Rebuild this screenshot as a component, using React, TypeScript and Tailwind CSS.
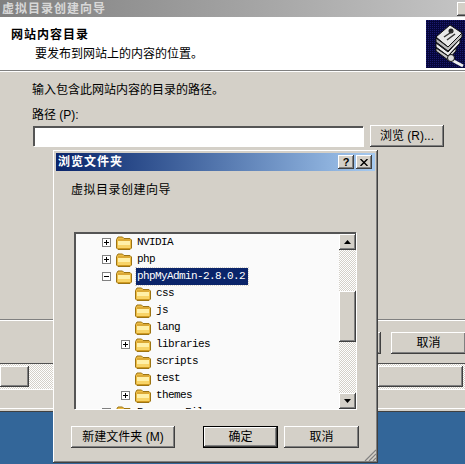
const font = "font-['Liberation_Sans','Noto_Sans_CJK_SC',sans-serif]"

const raised = 'shadow-[inset_-1px_-1px_0_#404040,inset_1px_1px_0_#ffffff,inset_-2px_-2px_0_#808080]'

const treeRows = [
  { label: 'NVIDIA', depth: 0, expander: '+' },
  { label: 'php', depth: 0, expander: '+' },
  { label: 'phpMyAdmin-2.8.0.2', depth: 0, expander: '-', selected: true },
  { label: 'css', depth: 1 },
  { label: 'js', depth: 1 },
  { label: 'lang', depth: 1 },
  { label: 'libraries', depth: 1, expander: '+' },
  { label: 'scripts', depth: 1 },
  { label: 'test', depth: 1 },
  { label: 'themes', depth: 1, expander: '+' },
  { label: 'Program Files', depth: 0, expander: '+' },
]

function Folder() {
  return (
    <svg width="16" height="14" viewBox="0 0 16 14" className="shrink-0">
      <path d="M0.500 3.500 L2 1 H6.500 L8 2.500 H14 L15.500 4 V12 L14 13.500 H2 L0.500 12 Z" fill="#eebc42" stroke="#9c7414" />
      <path d="M2 5 H14 V9 H2 Z" fill="#fff0a8" />
      <path d="M2 9 H14 V12 H2 Z" fill="#f8d468" />
      <path d="M2 4 H14" stroke="#c8962a" />
      <path d="M2 12.500 H14" stroke="#d09a20" />
    </svg>
  )
}

function Expander({ type }: { type: string }) {
  return (
    <span className="relative mr-[5px] h-[9px] w-[9px] shrink-0 border border-[#808080] bg-white">
      <span className="absolute left-[1px] top-[3px] h-[1px] w-[5px] bg-black" />
      {type === '+' && <span className="absolute left-[3px] top-[1px] h-[5px] w-[1px] bg-black" />}
    </span>
  )
}

function WinButton({ label, className = '', isDefault = false }: { label: string; className?: string; isDefault?: boolean }) {
  return (
    <div className={`flex h-[22px] shrink-0 items-center justify-center whitespace-pre bg-[#d4d0c8] text-[12px] text-black ${isDefault ? 'border border-black' : ''} ${raised} ${className}`}>
      {label}
    </div>
  )
}

function ScrollArrow({ up }: { up?: boolean }) {
  return (
    <div className={`flex h-[16px] w-full shrink-0 items-center justify-center bg-[#d4d0c8] ${raised}`}>
      <svg width="7" height="4" viewBox="0 0 7 4">
        <path d={up ? 'M3.500 0 L7 4 H0 Z' : 'M0 0 H7 L3.500 4 Z'} fill="#000" />
      </svg>
    </div>
  )
}

function WizardIcon() {
  return (
    <svg width="39" height="48" viewBox="0 0 39 48" className="shrink-0">
      <defs>
        <pattern id="dots" width="2" height="2" patternUnits="userSpaceOnUse">
          <rect width="2" height="2" fill="#06063a" />
          <rect width="1" height="1" fill="#1b1b70" />
        </pattern>
      </defs>
      <rect width="39" height="48" fill="url(#dots)" />
      <path d="M10 17 L24 5 L36 13 L22 27 Z" fill="#e8e8e8" stroke="#111" />
      <circle cx="25" cy="11" r="2.500" fill="#222" />
      <path d="M18 17 L27 11 M21 20 L29 14" stroke="#333" strokeWidth="1.500" />
      <path d="M10 18 V22 L22 31 L36 17 V13 L22 27 Z" fill="#bcbcbc" stroke="#111" />
      <path d="M10 23 V27 L22 36 L34 23 V19 L22 32 Z" fill="#ededed" stroke="#111" />
      <path d="M10 28 V31 L22 40 L30 31 V28 L22 36 Z" fill="#c8c8c8" stroke="#111" />
      <path d="M22 38 L37 46" stroke="#eee" strokeWidth="3" />
      <circle cx="25" cy="38" r="3.500" fill="#ddd" stroke="#111" />
    </svg>
  )
}

function BrowseDialog() {
  return (
    <div className="absolute left-[53px] top-[150px] flex h-[313px] w-[325px] flex-col bg-[#d4d0c8] p-[3px] shadow-[inset_-1px_-1px_0_#404040,inset_1px_1px_0_#ffffff,inset_-2px_-2px_0_#808080]">
      <div className="flex h-[18px] shrink-0 items-center justify-between bg-gradient-to-r from-[#0a246a] to-[#a6caf0] pl-[2px] pr-[3px]">
        <span className="text-[12px] font-bold tracking-[1px] text-white">浏览文件夹</span>
        <div className="flex gap-[2px]">
          <div className={`flex h-[14px] w-[16px] items-center justify-center bg-[#d4d0c8] text-[11px] font-bold text-black ${raised}`}>?</div>
          <div className={`flex h-[14px] w-[16px] items-center justify-center bg-[#d4d0c8] ${raised}`}>
            <svg width="8" height="7" viewBox="0 0 8 7">
              <path d="M0.500 0 L7.500 7 M7.500 0 L0.500 7" stroke="#000" strokeWidth="1.400" />
            </svg>
          </div>
        </div>
      </div>

      <p className="ml-[15px] mt-[10px] h-[18px] text-[12px] tracking-[0.5px] text-black">虚拟目录创建向导</p>

      <div className="ml-[18px] mt-[33px] flex h-[177px] w-[282px] shrink-0 border-l-2 border-t-2 border-l-[#555555] border-t-[#555555] bg-[#fafafa] shadow-[1px_1px_0_#ffffff]">
        <div className="min-w-0 flex-1 overflow-hidden font-['Liberation_Mono',monospace]">
          {treeRows.map((row) => (
            <div key={row.label} className={`flex h-[17px] items-center ${row.depth === 0 ? 'pl-[26px]' : 'pl-[45px]'}`}>
              {row.expander ? <Expander type={row.expander} /> : <span className="mr-[5px] w-[9px] shrink-0" />}
              <Folder />
              <span
                className={`ml-[4px] whitespace-nowrap pl-[1px] pr-[3px] text-[11px] tracking-[-0.6px] ${row.selected ? 'bg-[#0a246a] text-white outline-1 outline-dotted outline-[#d4d0c8]' : 'text-black'}`}
              >
                {row.label}
              </span>
            </div>
          ))}
        </div>
        <div className="flex w-[17px] shrink-0 flex-col bg-[repeating-conic-gradient(#ffffff_0_25%,#d4d0c8_0_50%)] bg-[length:2px_2px]">
          <ScrollArrow up />
          <div className={`mt-[41px] h-[51px] w-full shrink-0 bg-[#d4d0c8] ${raised}`} />
          <div className="flex-1" />
          <ScrollArrow />
        </div>
      </div>

      <div className="ml-[15px] mt-[17px] flex">
        <WinButton label="新建文件夹 (M)" className="w-[104px]" />
        <WinButton label="确定" className="ml-[28px] w-[75px]" isDefault />
        <WinButton label="取消" className="ml-[6px] w-[75px]" />
      </div>

      <svg width="12" height="12" viewBox="0 0 12 12" className="absolute bottom-[2px] right-[2px]">
        <path d="M1 12 L12 1 M5 12 L12 5 M9 12 L12 9" stroke="#808080" strokeWidth="1.200" />
      </svg>
    </div>
  )
}

export default function App() {
  return (
    <div className={`relative flex h-[464px] w-[465px] flex-col overflow-hidden bg-[#d4d0c8] ${font}`}>
      <div className="flex h-[17px] shrink-0 items-center justify-between bg-gradient-to-r from-[#808080] to-[#c4c4c4] pl-[2px]">
        <span className="text-[12px] font-bold tracking-[1px] text-[#d8d8d8]">虚拟目录创建向导</span>
        <div className={`mr-[-8px] h-[14px] w-[16px] bg-[#d4d0c8] ${raised}`} />
      </div>

      <div className="flex h-[54px] shrink-0 items-center justify-between border-b border-b-[#808080] bg-white pl-[11px] shadow-[0_1px_0_#ffffff]">
        <div className="pt-[2px]">
          <h1 className="text-[12px] font-bold tracking-[1px] text-black">网站内容目录</h1>
          <p className="mt-[1px] pl-[24px] text-[12px] text-black">要发布到网站上的内容的位置。</p>
        </div>
        <WizardIcon />
      </div>

      <div className="flex h-[249px] shrink-0 flex-col border-b border-b-[#808080] pl-[32px] pt-[10px]">
        <p className="text-[12px] text-black">输入包含此网站内容的目录的路径。</p>
        <label className="mt-[7px] whitespace-pre text-[12px] text-black">路径 (P):</label>
        <div className="mt-[1px] flex items-center">
          <div className="ml-[1px] h-[20px] w-[330px] border-l-2 border-t-2 border-l-[#555555] border-t-[#555555] bg-white shadow-[1px_1px_0_#ffffff]" />
          <WinButton label="浏览 (R)..." className="ml-[7px] w-[74px]" />
        </div>
      </div>

      <div className="h-[1px] shrink-0 bg-white" />

      <div className="flex h-[43px] shrink-0 items-center justify-end gap-[10px] border-b border-b-[#505050] pt-[1px]">
        <WinButton label="下一步" className="w-[76px]" />
        <WinButton label="取消" className="mr-[-1px] w-[75px]" />
      </div>

      <div className="flex h-[25px] shrink-0 items-center bg-[repeating-conic-gradient(#ffffff_0_25%,#d4d0c8_0_50%)] bg-[length:2px_2px]">
        <div className={`h-[21px] w-[29px] shrink-0 bg-[#d4d0c8] ${raised}`} />
        <div className="w-[349px] shrink-0" />
        <div className={`h-[21px] w-[85px] shrink-0 bg-[#d4d0c8] ${raised}`} />
      </div>

      <div className="h-[19px] shrink-0 border-t border-t-white" />
      <div className="h-[3px] shrink-0 border-t border-t-white" />
      <div className="flex-1 border-t border-t-[#404040] bg-[#336699]" />

      <BrowseDialog />
    </div>
  )
}
